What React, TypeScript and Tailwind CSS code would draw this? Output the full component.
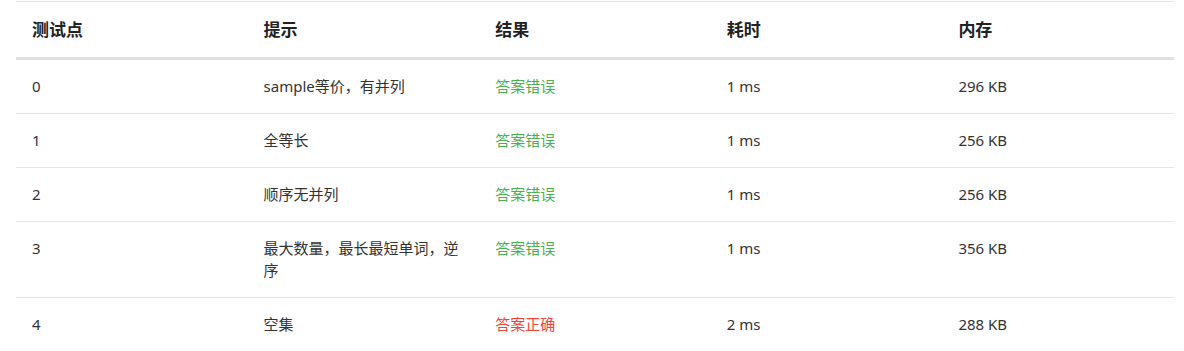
const rows = [
  { id: "0", hint: "sample等价，有并列", ok: false, time: "1 ms", mem: "296 KB" },
  { id: "1", hint: "全等长", ok: false, time: "1 ms", mem: "256 KB" },
  { id: "2", hint: "顺序无并列", ok: false, time: "1 ms", mem: "256 KB" },
  { id: "3", hint: "最大数量，最长最短单词，逆序", ok: false, time: "1 ms", mem: "356 KB" },
  { id: "4", hint: "空集", ok: true, time: "2 ms", mem: "288 KB" },
];

const App = () => {
  return (
    <div
      className="bg-white pl-4 pr-[10px] pt-px"
      style={{ fontFamily: '"Noto Sans", "Noto Sans CJK SC", sans-serif' }}
    >
      <table className="w-full table-fixed border-collapse text-left">
        <thead>
          <tr className="border-t border-[#e4e6eb] border-b-[3px] border-b-[#dfe1e6]">
            {["测试点", "提示", "结果", "耗时", "内存"].map((h) => (
              <th key={h} className="px-4 pt-4 pb-[15px] text-[17px] leading-6 font-bold text-[#222]">
                {h}
              </th>
            ))}
          </tr>
        </thead>
        <tbody className="text-[15px] leading-[22px] text-[#333]">
          {rows.map((r) => (
            <tr key={r.id} className="border-b border-[#e4e6eb] align-top">
              <td className="px-4 pt-[15px] pb-4">{r.id}</td>
              <td className="px-4 pt-[15px] pb-4">{r.hint}</td>
              <td
                className={
                  r.ok
                    ? "px-4 pt-[15px] pb-4 text-[#f44336]"
                    : "px-4 pt-[15px] pb-4 text-[#4caf50]"
                }
              >
                {r.ok ? "答案正确" : "答案错误"}
              </td>
              <td className="px-4 pt-[15px] pb-4">{r.time}</td>
              <td className="px-4 pt-[15px] pb-4">{r.mem}</td>
            </tr>
          ))}
        </tbody>
      </table>
    </div>
  );
};

export default App;
